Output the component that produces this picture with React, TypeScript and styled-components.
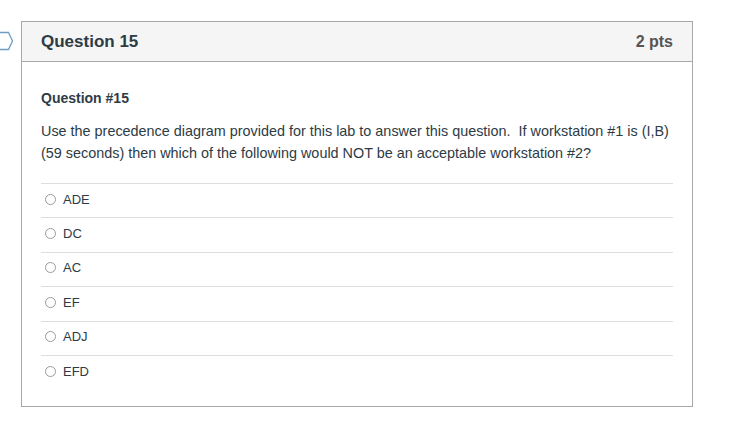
import React from 'react';
import styled, { createGlobalStyle } from 'styled-components';

const GlobalStyle = createGlobalStyle`
  body {
    margin: 0;
    background: #ffffff;
    font-family: "Liberation Sans", Arial, sans-serif;
    color: #2d3b45;
  }
`;

const Page = styled.div`
  padding: 21px 0 0 21px;
`;

const Card = styled.div`
  position: relative;
  width: 670px;
  border: 1px solid #a8a8a8;
  background: #ffffff;
`;

const Flag = styled.svg`
  position: absolute;
  left: -22px;
  top: 9px;
`;

const Header = styled.div`
  display: flex;
  align-items: center;
  justify-content: space-between;
  height: 39px;
  padding: 0 19px 0 19px;
  background: #f5f5f5;
  border-bottom: 1px solid #a8a8a8;
`;

const Title = styled.h2`
  margin: 0;
  font-size: 17px;
  font-weight: 700;
  color: #2d3b45;
`;

const Points = styled.span`
  font-size: 16px;
  font-weight: 700;
  color: #555555;
`;

const Body = styled.div`
  padding: 27px 19px 17px 19px;
`;

const Subtitle = styled.div`
  font-size: 14px;
  font-weight: 700;
  line-height: 18px;
  margin-bottom: 13px;
`;

const Prompt = styled.p`
  margin: 0 0 19px 0;
  font-size: 14.4px;
  line-height: 22px;
  white-space: pre-wrap;
`;

const Answers = styled.div`
  display: flex;
  flex-direction: column;
`;

const Answer = styled.label`
  display: flex;
  align-items: center;
  gap: 7px;
  height: 34.4px;
  padding: 0 0 3px 4px;
  box-sizing: border-box;
  border-top: 1px solid #dddddd;
  font-size: 13px;
  color: #2d3b45;
`;

const Radio = styled.span`
  width: 11px;
  height: 11px;
  border-radius: 50%;
  border: 1px solid #9a9a9a;
  box-sizing: border-box;
  background: #ffffff;
`;

const options = ['ADE', 'DC', 'AC', 'EF', 'ADJ', 'EFD'];

export default function App() {
  return (
    <Page>
      <GlobalStyle />
      <Card>
        <Flag width="14" height="20" viewBox="0 0 14 20">
          <path d="M-4 1.5 H8.5 L12.5 10 L8.5 18.5 H-4" fill="none" stroke="#6f9cc5" strokeWidth="1.3" />
        </Flag>
        <Header>
          <Title>Question 15</Title>
          <Points>2 pts</Points>
        </Header>
        <Body>
          <Subtitle>Question #15</Subtitle>
          <Prompt>
            {'Use the precedence diagram provided for this lab to answer this question.  If workstation #1 is (I,B) (59 seconds) then which of the following would NOT be an acceptable workstation #2?'}
          </Prompt>
          <Answers>
            {options.map((o) => (
              <Answer key={o}>
                <Radio />
                {o}
              </Answer>
            ))}
          </Answers>
        </Body>
      </Card>
    </Page>
  );
}
